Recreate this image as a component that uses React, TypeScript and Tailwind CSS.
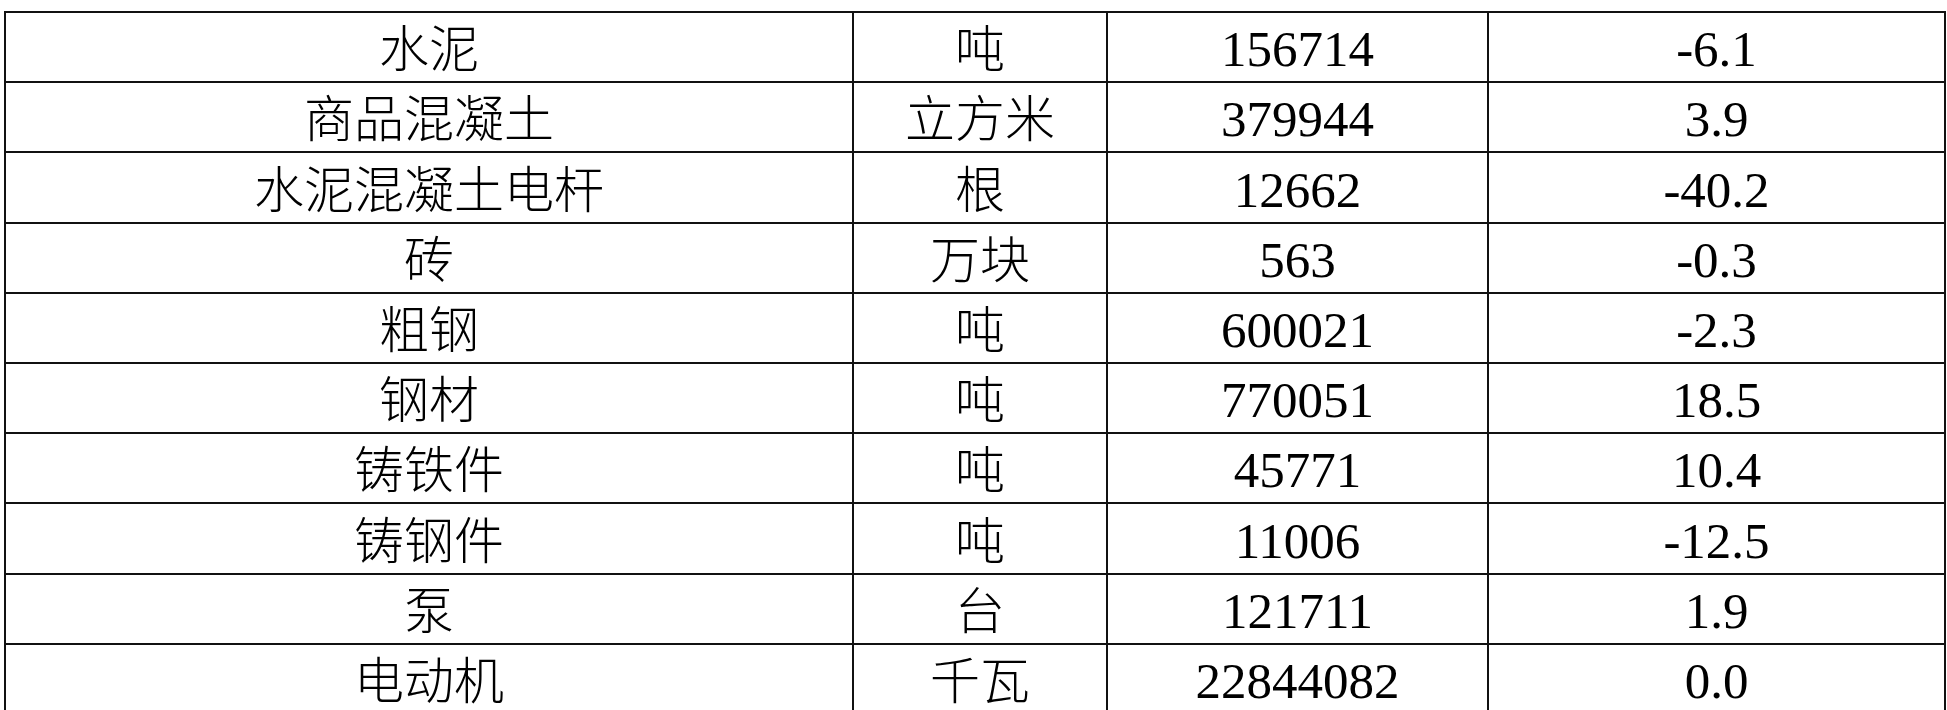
import React from 'react';

interface Row {
  name: string;
  unit: string;
  output: string;
  growth: string;
}

const rows: Row[] = [
  { name: '水泥', unit: '吨', output: '156714', growth: '-6.1' },
  { name: '商品混凝土', unit: '立方米', output: '379944', growth: '3.9' },
  { name: '水泥混凝土电杆', unit: '根', output: '12662', growth: '-40.2' },
  { name: '砖', unit: '万块', output: '563', growth: '-0.3' },
  { name: '粗钢', unit: '吨', output: '600021', growth: '-2.3' },
  { name: '钢材', unit: '吨', output: '770051', growth: '18.5' },
  { name: '铸铁件', unit: '吨', output: '45771', growth: '10.4' },
  { name: '铸钢件', unit: '吨', output: '11006', growth: '-12.5' },
  { name: '泵', unit: '台', output: '121711', growth: '1.9' },
  { name: '电动机', unit: '千瓦', output: '22844082', growth: '0.0' },
];

const cell = 'flex items-end justify-center pb-[6px] leading-none border-r-2 border-[#111]';

const App: React.FC = () => {
  return (
    <div className="w-[1947px] h-[710px] overflow-hidden bg-white pt-[11px] pl-[4px]">
      <div className="w-[1942px] border-t-2 border-l-2 border-[#111] font-['Liberation_Serif','Noto_Sans_CJK_SC',serif] text-black">
        {rows.map((r, i) => (
          <div
            key={i}
            className="grid grid-cols-[848px_254px_381px_457px] h-[70.2px] border-b-2 border-[#111]"
          >
            {/* 产品名称 / 单位 */}
            <div className={`${cell} text-[50px] font-light`}>{r.name}</div>
            <div className={`${cell} text-[50px] font-light`}>{r.unit}</div>
            {/* 产量 / 增长 */}
            <div className={`${cell} text-[51px]`}>{r.output}</div>
            <div className={`${cell} text-[51px]`}>{r.growth}</div>
          </div>
        ))}
      </div>
    </div>
  );
};

export default App;
